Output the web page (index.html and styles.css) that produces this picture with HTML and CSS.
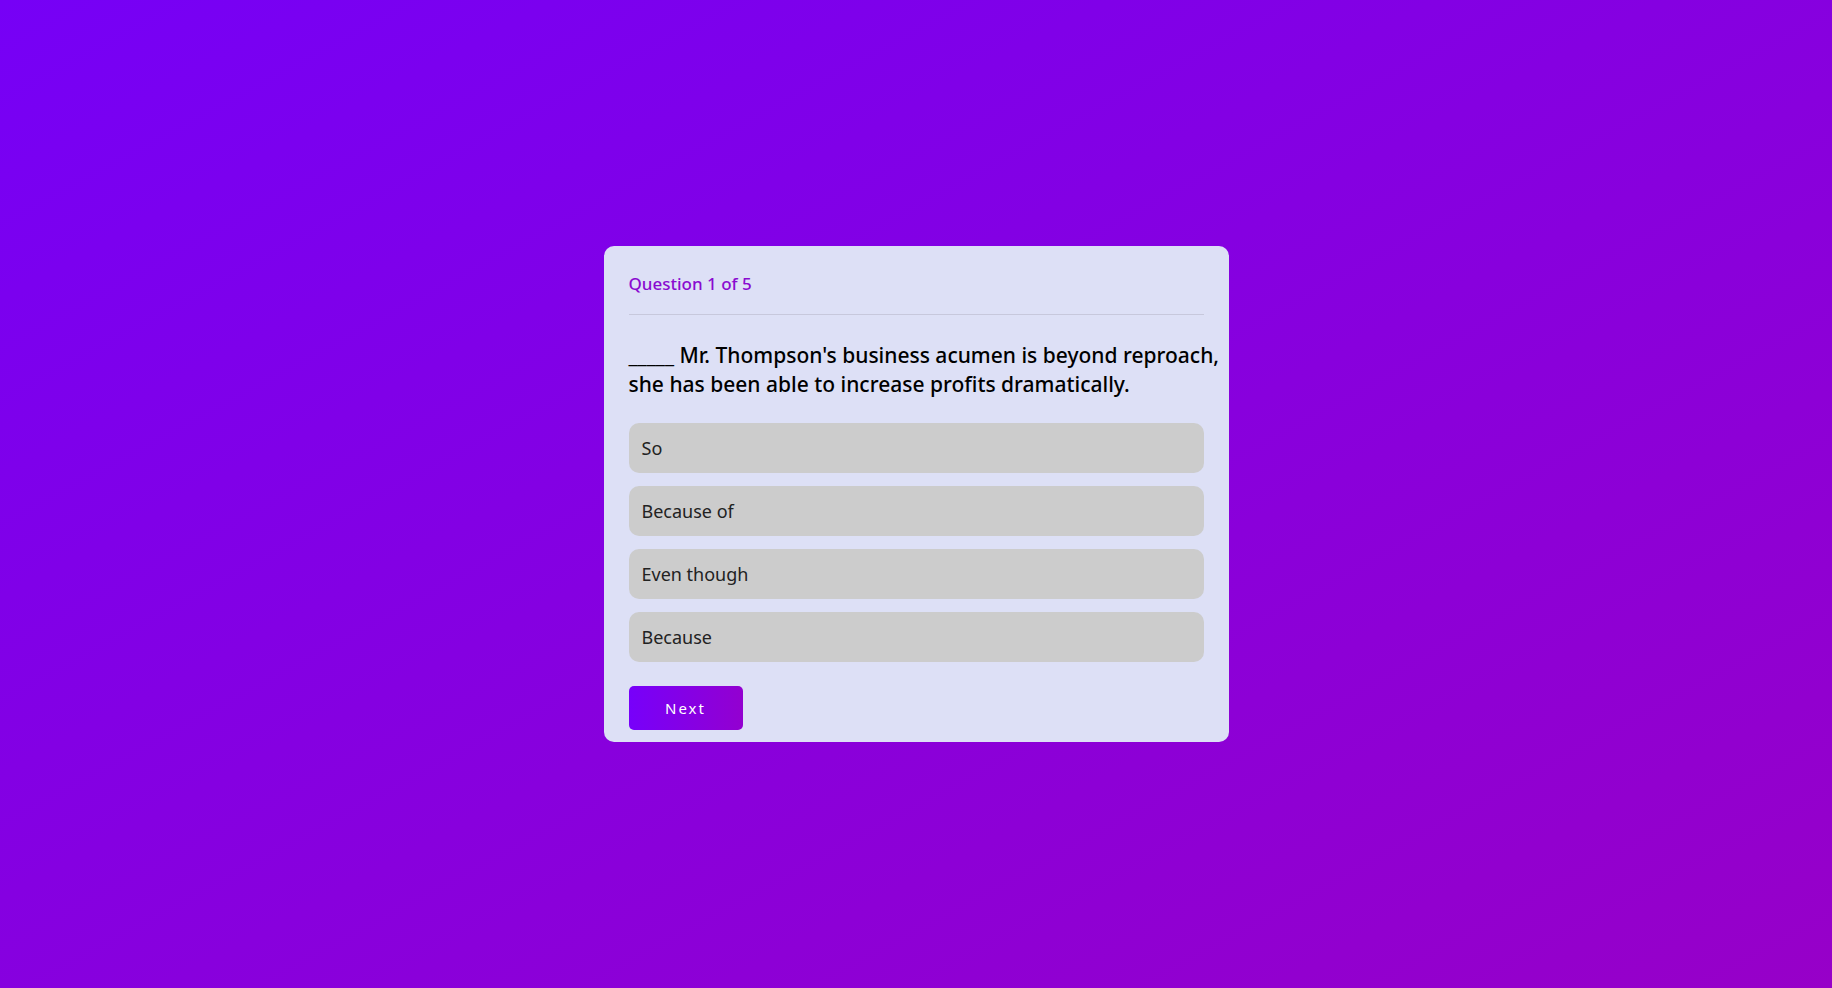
FILE: index.html
```html
<!DOCTYPE html>
<html lang="en">
<head>
<meta charset="utf-8">
<title>Quiz</title>
<link rel="stylesheet" href="styles.css">
</head>
<body>
<main class="page">
  <section class="quiz">
    <header class="quiz-header">
      <span class="counter">Question 1 of 5</span>
    </header>
    <h2 class="question">_____ Mr. Thompson's business acumen is beyond reproach, she has been able to increase profits dramatically.</h2>
    <div class="options">
      <button class="option">So</button>
      <button class="option">Because of</button>
      <button class="option">Even though</button>
      <button class="option">Because</button>
    </div>
    <button class="next">Next</button>
  </section>
</main>
</body>
</html>
```
FILE: styles.css
```css
* { box-sizing: border-box; }
html, body { margin: 0; height: 100%; }
body {
  font-family: "Noto Sans", "Open Sans", sans-serif;
  background: linear-gradient(to right bottom, #7600f6, #9700c8);
}
.page {
  min-height: 100vh;
  display: flex;
  align-items: center;
  justify-content: center;
}
.quiz {
  width: 625px;
  background: #dde0f6;
  border-radius: 10px;
  padding: 24px 25px 12px;
}
.quiz-header {
  padding-bottom: 17px;
  border-bottom: 1px solid #c7c8dc;
}
.counter {
  display: block;
  color: #8a0ad0;
  font-size: 17px;
  line-height: 27px;
  font-weight: 500;
}
.question {
  margin: 26px -35px 24px 0;
  font-size: 21px;
  line-height: 29px;
  font-weight: 500;
  color: #000;
}
.options {
  display: flex;
  flex-direction: column;
  gap: 13px;
}
.option {
  display: block;
  width: 100%;
  height: 50px;
  border: none;
  border-radius: 10px;
  background: #cccccc;
  text-align: left;
  padding: 0 13px;
  font-family: inherit;
  font-size: 18px;
  color: #222;
}
.next {
  margin-top: 24px;
  width: 114px;
  height: 44px;
  border: none;
  border-radius: 5px;
  background: linear-gradient(to right, #7700fa, #9300d0);
  color: #fff;
  font-family: inherit;
  font-size: 15px;
  letter-spacing: 2px;
}
```
